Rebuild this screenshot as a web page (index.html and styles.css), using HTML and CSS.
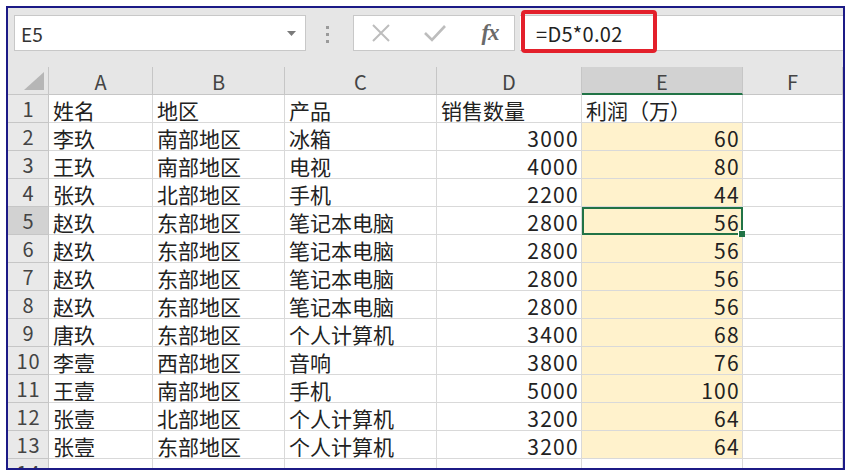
FILE: index.html
```html
<!DOCTYPE html>
<html lang="zh">
<head>
<meta charset="utf-8">
<title>Excel</title>
<link rel="stylesheet" href="styles.css">
</head>
<body>
<div class="frame">
  <div class="toolbar">
    <div class="namebox"><span>E5</span><svg class="drop" width="9" height="5" viewBox="0 0 9 5"><polygon points="0,0 9,0 4.5,5" fill="#7a7a7a"/></svg></div>
    <div class="grip"><i></i><i></i><i></i></div>
    <div class="btns">
      <svg class="ico" width="20" height="20" viewBox="0 0 20 20"><path d="M2 2 L18 18 M18 2 L2 18" stroke="#bdbdbd" stroke-width="2" fill="none"/></svg>
      <svg class="ico" width="24" height="20" viewBox="0 0 24 20"><path d="M2 10 L9 17 L22 3" stroke="#bdbdbd" stroke-width="2.6" fill="none"/></svg>
      <span class="fx">fx</span>
    </div>
    <div class="formula">=D5*0.02</div>
    <div class="annot"></div>
  </div>
  <div class="sheet">
    <div class="hd corner"><svg width="20" height="18" viewBox="0 0 20 18"><polygon points="20,0 20,18 0,18" fill="#b6b6b6"/></svg></div>
    <div class="hd col">A</div><div class="hd col">B</div><div class="hd col">C</div><div class="hd col">D</div><div class="hd col sel">E</div><div class="hd col">F</div>

    <div class="hd row">1</div><div class="c">姓名</div><div class="c">地区</div><div class="c">产品</div><div class="c">销售数量</div><div class="c">利润（万）</div><div class="c"></div>
    <div class="hd row">2</div><div class="c">李玖</div><div class="c">南部地区</div><div class="c">冰箱</div><div class="c n">3000</div><div class="c n y">60</div><div class="c"></div>
    <div class="hd row">3</div><div class="c">王玖</div><div class="c">南部地区</div><div class="c">电视</div><div class="c n">4000</div><div class="c n y">80</div><div class="c"></div>
    <div class="hd row">4</div><div class="c">张玖</div><div class="c">北部地区</div><div class="c">手机</div><div class="c n">2200</div><div class="c n y">44</div><div class="c"></div>
    <div class="hd row rsel">5</div><div class="c">赵玖</div><div class="c">东部地区</div><div class="c">笔记本电脑</div><div class="c n">2800</div><div class="c n y active">56<span class="handle"></span></div><div class="c"></div>
    <div class="hd row">6</div><div class="c">赵玖</div><div class="c">东部地区</div><div class="c">笔记本电脑</div><div class="c n">2800</div><div class="c n y">56</div><div class="c"></div>
    <div class="hd row">7</div><div class="c">赵玖</div><div class="c">东部地区</div><div class="c">笔记本电脑</div><div class="c n">2800</div><div class="c n y">56</div><div class="c"></div>
    <div class="hd row">8</div><div class="c">赵玖</div><div class="c">东部地区</div><div class="c">笔记本电脑</div><div class="c n">2800</div><div class="c n y">56</div><div class="c"></div>
    <div class="hd row">9</div><div class="c">唐玖</div><div class="c">东部地区</div><div class="c">个人计算机</div><div class="c n">3400</div><div class="c n y">68</div><div class="c"></div>
    <div class="hd row">10</div><div class="c">李壹</div><div class="c">西部地区</div><div class="c">音响</div><div class="c n">3800</div><div class="c n y">76</div><div class="c"></div>
    <div class="hd row">11</div><div class="c">王壹</div><div class="c">南部地区</div><div class="c">手机</div><div class="c n">5000</div><div class="c n y">100</div><div class="c"></div>
    <div class="hd row">12</div><div class="c">张壹</div><div class="c">北部地区</div><div class="c">个人计算机</div><div class="c n">3200</div><div class="c n y">64</div><div class="c"></div>
    <div class="hd row">13</div><div class="c">张壹</div><div class="c">东部地区</div><div class="c">个人计算机</div><div class="c n">3200</div><div class="c n y">64</div><div class="c"></div>
    <div class="hd row">14</div><div class="c"></div><div class="c"></div><div class="c"></div><div class="c"></div><div class="c"></div><div class="c"></div>
  </div>
</div>
</body>
</html>
```

FILE: styles.css
```css
* { box-sizing: border-box; }
html, body { margin: 0; padding: 0; background: #fff; }
body { font-family: "Noto Sans CJK SC", "Noto Sans", sans-serif; color: #222; }

.frame {
  margin: 6px 0 0 6px;
  width: 839px;
  height: 464px;
  border: 2px solid #1c1a86;
  overflow: hidden;
  background: #fff;
}

.toolbar {
  position: relative;
  height: 59px;
  background: #e6e6e6;
  display: flex;
  align-items: flex-start;
  padding: 7px 0 0 6px;
}
.namebox {
  width: 292px;
  height: 36px;
  background: #fff;
  border: 1px solid #c8c8c8;
  display: flex;
  align-items: center;
  justify-content: space-between;
  padding: 0 9px 0 6px;
  font-size: 19px;
  color: #333;
}
.grip {
  margin: 11px 0 0 20px;
  width: 4px;
  display: flex;
  flex-direction: column;
  gap: 4px;
}
.grip i { display: block; width: 3px; height: 3px; background: #9a9a9a; }
.btns {
  margin-left: 23px;
  width: 162px;
  height: 36px;
  background: #fff;
  border: 1px solid #c8c8c8;
  display: grid;
  grid-template-columns: 54px 54px 52px;
  align-items: center;
  justify-items: center;
}
.fx {
  font-family: "Liberation Serif", "DejaVu Serif", serif;
  font-style: italic;
  font-weight: bold;
  font-size: 23px;
  color: #6a6a6a;
  letter-spacing: -1px;
  margin-left: 4px;
}
.formula {
  margin-left: 5px;
  flex: 1;
  height: 36px;
  background: #fff;
  border-top: 1px solid #c8c8c8;
  border-bottom: 1px solid #c8c8c8;
  padding-left: 16px;
  display: flex;
  align-items: center;
  font-size: 20px;
  letter-spacing: 0.3px;
  color: #222;
}
.annot {
  position: absolute;
  left: 513px;
  top: 2px;
  width: 136px;
  height: 43px;
  border: 4px solid #e3202b;
  border-radius: 4px;
}

.sheet {
  display: grid;
  grid-template-columns: 41px 104px 132px 152px 145px 161px 100px;
  grid-auto-rows: 28px;
  font-size: 21px;
}
.hd {
  background: #e6e6e6;
  color: #444;
  display: flex;
  align-items: center;
  justify-content: center;
  border-right: 1px solid #c6c6c6;
  border-bottom: 1px solid #c6c6c6;
  font-size: 20px;
}
.corner { justify-content: flex-end; align-items: flex-end; padding: 0 4px 4px 0; }
.col { padding-top: 2px; }
.hd.sel { background: #d2d2d2; border-bottom: 2px solid #217346; }
.row { background: #e9e9e9; letter-spacing: 1px; padding-left: 1px; }
.hd.rsel { background: #d2d2d2; }
.c {
  position: relative;
  border-right: 1px solid #d9d9d9;
  border-bottom: 1px solid #d9d9d9;
  padding: 2px 4px 0 4px;
  display: flex;
  align-items: center;
  white-space: nowrap;
}
.n { justify-content: flex-end; padding-right: 2px; letter-spacing: 1.3px; }
.y { background: #fff2cc; }
.active { outline: 2px solid #217346; outline-offset: -2px; z-index: 2; }
.handle {
  position: absolute;
  right: -3px;
  bottom: -3px;
  width: 7px;
  height: 7px;
  background: #217346;
  border-top: 1px solid #fff;
  border-left: 1px solid #fff;
}
```
